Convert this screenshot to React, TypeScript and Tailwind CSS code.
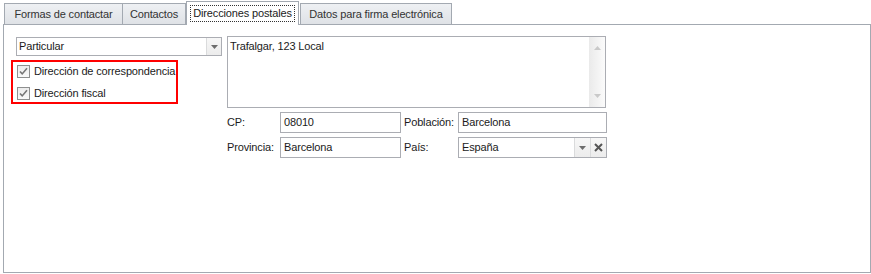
import React from 'react';

// Small building blocks for the WinForms-like look

function Tab({ label, active = false, className = '' }: { label: string; active?: boolean; className?: string }) {
  if (active) {
    return (
      <div
        className={`relative z-10 -mb-px h-[24px] bg-white border border-b-0 border-[#a3a9b1] flex items-start justify-center pt-[3px] ${className}`}
      >
        <span className="h-[17px] px-[2px] flex items-center border border-dotted border-[#333]">{label}</span>
      </div>
    );
  }
  return (
    <div
      className={`h-[21px] border border-b-0 border-[#a3a9b1] bg-gradient-to-b from-[#eef0f3] to-[#dfe2e6] text-[#333] flex items-center justify-center ${className}`}
    >
      {label}
    </div>
  );
}

function Arrow({ color = '#555' }: { color?: string }) {
  return (
    <svg width="7" height="4" viewBox="0 0 7 4">
      <path d="M0 0h7L3.5 4z" fill={color} />
    </svg>
  );
}

function Check() {
  return (
    <div className="w-[13px] h-[13px] border border-[#8e8f8f] bg-gradient-to-b from-[#ececec] to-[#f9f9f9] flex items-center justify-center">
      <svg width="9" height="9" viewBox="0 0 9 9">
        <path d="M1 4.5l2.2 2.4L8 1.2" fill="none" stroke="#767676" strokeWidth="1.6" />
      </svg>
    </div>
  );
}

function TextBox({ value, className = '' }: { value: string; className?: string }) {
  return (
    <div className={`h-[21px] border border-[#abadb3] bg-white flex items-center pl-[3px] ${className}`}>{value}</div>
  );
}

export default function App() {
  return (
    <div className="w-[871px] h-[274px] bg-white text-[11px] text-[#1b1b1b] tracking-[-0.15px] font-['Liberation_Sans',Arial,sans-serif]">
      {/* Tab strip */}
      <div className="flex items-end h-[24px] pl-[4px]">
        <Tab label="Formas de contactar" className="w-[119px]" />
        <Tab label="Contactos" className="w-[63px] border-l-0" />
        <Tab label="Direcciones postales" active className="w-[113px]" />
        <Tab label="Datos para firma electrónica" className="ml-[1px] w-[152px]" />
      </div>

      {/* Page */}
      <div className="ml-[3px] w-[868px] h-[249px] border border-[#a3a9b1] pt-[11px] pl-[12px]">
        <div className="flex items-start">
          {/* Left column */}
          <div className="w-[206px] mt-[1px]">
            <div className="h-[19px] border border-[#abadb3] bg-white flex">
              <div className="flex-1 flex items-center pl-[2px]">Particular</div>
              <div className="w-[15px] border-l border-[#dadbdc] bg-gradient-to-b from-[#f7f7f7] to-[#ececec] flex items-center justify-center">
                <Arrow color="#6d6d6d" />
              </div>
            </div>
            <div className="mt-[4px] -ml-[5px] w-[167px] h-[44px] border-2 border-[#ff0000] pl-[4px]">
              <div className="h-[18px] flex items-center gap-[4px]">
                <Check />
                <span>Dirección de correspondencia</span>
              </div>
              <div className="mt-[4px] h-[18px] flex items-center gap-[4px]">
                <Check />
                <span>Dirección fiscal</span>
              </div>
            </div>
          </div>

          {/* Right column */}
          <div className="ml-[5px]">
            <div className="w-[379px] h-[72px] border border-[#abadb3] bg-white flex">
              <div className="flex-1 pl-[2px] pt-[1px]">Trafalgar, 123 Local</div>
              <div className="w-[16px] bg-gradient-to-r from-[#eaeaea] to-[#fbfbfb] flex flex-col items-center justify-between py-[9px]">
                <div className="rotate-180">
                  <Arrow color="#c9c9c9" />
                </div>
                <Arrow color="#c9c9c9" />
              </div>
            </div>

            <div className="mt-[4px] flex items-center">
              <span className="w-[53px]">CP:</span>
              <TextBox value="08010" className="w-[121px]" />
              <span className="ml-[3px] w-[54px]">Población:</span>
              <TextBox value="Barcelona" className="w-[149px]" />
            </div>
            <div className="mt-[4px] flex items-center">
              <span className="w-[53px]">Provincia:</span>
              <TextBox value="Barcelona" className="w-[121px]" />
              <span className="ml-[3px] w-[54px]">País:</span>
              <div className="w-[149px] h-[21px] border border-[#abadb3] bg-white flex">
                <div className="flex-1 flex items-center pl-[3px]">España</div>
                <div className="w-[16px] border-l border-[#dadbdc] bg-gradient-to-b from-[#f7f7f7] to-[#ececec] flex items-center justify-center">
                  <Arrow color="#6d6d6d" />
                </div>
                <div className="w-[16px] border-l border-[#dadbdc] bg-gradient-to-b from-[#f7f7f7] to-[#ececec] flex items-center justify-center">
                  <svg width="9" height="9" viewBox="0 0 9 9">
                    <path d="M1 1l7 7M8 1L1 8" stroke="#555" strokeWidth="2" />
                  </svg>
                </div>
              </div>
            </div>
          </div>
        </div>
      </div>
    </div>
  );
}
